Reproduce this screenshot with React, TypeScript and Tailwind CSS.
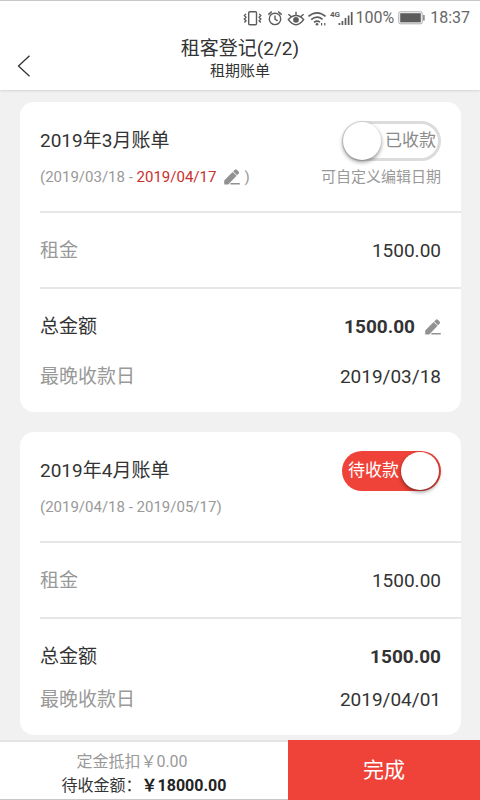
import { clsx } from 'clsx';

interface Bill {
  id: string;
  title: string;
  start: string;
  end: string;
  rent: string;
  total: string;
  dueDate: string;
  pending: boolean;
  editable: boolean;
}

const bills: Bill[] = [
  {
    id: '2019-03',
    title: '2019年3月账单',
    start: '2019/03/18',
    end: '2019/04/17',
    rent: '1500.00',
    total: '1500.00',
    dueDate: '2019/03/18',
    pending: false,
    editable: true,
  },
  {
    id: '2019-04',
    title: '2019年4月账单',
    start: '2019/04/18',
    end: '2019/05/17',
    rent: '1500.00',
    total: '1500.00',
    dueDate: '2019/04/01',
    pending: true,
    editable: false,
  },
];

function EditIcon() {
  return (
    <svg width="16" height="16" viewBox="0 0 16 16" fill="#929292" aria-hidden="true">
      <path d="M0.2 15.5 V11.6 L8.6 3 L12.6 6.8 L4.2 15.5 Z" />
      <path d="M9.2 2.4 L10.9 0.7 Q11.8 0 12.7 0.7 L14.6 2.6 Q15.4 3.5 14.7 4.4 L13.1 6.2 Z" />
      <rect x="6.4" y="14" width="9.4" height="1.5" />
    </svg>
  );
}

function StatusBar() {
  return (
    <div className="flex h-[34px] items-center justify-end border-t border-[#c8c8c8] pr-[10px] text-[16px] text-[#666]">
      <svg width="112" height="20" viewBox="0 0 112 20" fill="none" stroke="#5c5c5c" strokeWidth="1.4" aria-hidden="true">
        {/* vibrate */}
        <rect x="6.7" y="3.7" width="7.8" height="13" rx="1" />
        <path d="M4 6 L2.4 7.5 L4 9.3 L2.4 11 L4 12.7 L2.4 14.4 M17.2 6 L18.8 7.5 L17.2 9.3 L18.8 11 L17.2 12.7 L18.8 14.4" />
        {/* alarm */}
        <circle cx="33" cy="10.9" r="5.7" />
        <path d="M33 7.4 V11.2 L35.6 12.8 M26.3 6.6 L29.8 3.6 M39.7 6.6 L36.2 3.6" />
        {/* eye comfort */}
        <path d="M46.4 11.6 Q50 7.6 54 7.6 Q58 7.6 61.6 11.6 Q58 16.7 54 16.7 Q50 16.7 46.4 11.6 Z" strokeWidth="1.5" />
        <path d="M46.4 6.2 L49.6 9 M54 3.8 V7.6 M61.6 6.2 L58.4 9" />
        <circle cx="54" cy="11.8" r="2.9" fill="#5c5c5c" stroke="none" />
        {/* wifi */}
        <path d="M66.4 8.4 Q75 1.2 83.6 8.4 M69.2 11.6 Q75 6.8 80.6 11.4 M72 14.4 Q75 12 78 14.2" strokeWidth="1.6" />
        <circle cx="75" cy="16.3" r="1.3" fill="#5c5c5c" stroke="none" />
        <path d="M79.6 15 V17.4 M82.8 15 V17.4" strokeWidth="1.2" />
        {/* signal */}
        <path d="M97.4 15 V17 M100.4 13 V17 M103.5 10 V17 M106.6 7.5 V17 M109.7 4 V17" strokeWidth="1.7" />
        <text x="88" y="9" fontSize="8" fontWeight="700" fill="#5c5c5c" stroke="none">4G</text>
      </svg>
      <span className="ml-px">100%</span>
      <svg className="ml-1" width="28" height="14" viewBox="0 0 28 14" fill="none" aria-hidden="true">
        <rect x="0.8" y="0.8" width="23.4" height="12" rx="1.4" stroke="#aaa" />
        <rect x="2.2" y="2.2" width="20.6" height="9.2" fill="#5c5c5c" />
        <rect x="25.2" y="4" width="1.4" height="5.6" fill="#777" />
      </svg>
      <span className="ml-1">18:37</span>
    </div>
  );
}

function StatusSwitch({ id, pending }: { id: string; pending: boolean }) {
  return (
    <label
      htmlFor={id}
      className={clsx(
        'relative flex h-10 w-[99px] cursor-pointer items-center rounded-full text-[17px]',
        pending ? 'bg-[#ef4339] pl-[6px] text-white' : 'justify-end border-3 border-[#dcdcdc] bg-white pr-[2px] text-[#8a8a8a]',
      )}
    >
      <input id={id} type="checkbox" role="switch" defaultChecked={pending} className="sr-only" />
      {pending ? '待收款' : '已收款'}
      <span
        className={clsx(
          'absolute h-[38px] w-[38px] rounded-full bg-white shadow-[0_2px_4px_rgba(0,0,0,0.45)]',
          pending ? 'top-px right-[2px]' : '-top-[2px] -left-[2px]',
        )}
      />
    </label>
  );
}

function BillCard({ bill }: { bill: Bill }) {
  const row = clsx('flex items-center justify-between', bill.editable ? 'h-[50px]' : 'h-[43px]');

  return (
    <section className="rounded-[14px] bg-white pl-5">
      <div className="border-b-2 border-[#e6e6e6] pt-[19px] pr-5 pb-[18px]">
        <div className="flex h-10 items-center justify-between">
          <h2>{bill.title}</h2>
          <StatusSwitch id={bill.id} pending={bill.pending} />
        </div>
        <div className="flex h-8 items-center justify-between text-[15px] text-[#999]">
          <p className="flex items-center whitespace-pre">
            <span>({bill.start} - </span>
            <span className={bill.editable ? 'text-[#c9302c]' : ''}>{bill.end}</span>
            {bill.editable && (
              <button type="button" aria-label="编辑日期" className="mr-1 ml-2">
                <EditIcon />
              </button>
            )}
            <span>)</span>
          </p>
          {bill.editable && <span>可自定义编辑日期</span>}
        </div>
      </div>
      <div className="flex h-[76px] items-center justify-between border-b-2 border-[#e6e6e6] pt-[3px] pr-5">
        <span className="text-[#999]">租金</span>
        <span>{bill.rent}</span>
      </div>
      <div className={clsx('pr-5', bill.editable ? 'pt-[13px] pb-[10px]' : 'pt-[17px] pb-[13px]')}>
        <div className={row}>
          <span>总金额</span>
          <span className="flex items-center gap-[10px]">
            <b className="font-bold">{bill.total}</b>
            {bill.editable && (
              <button type="button" aria-label="编辑总金额">
                <EditIcon />
              </button>
            )}
          </span>
        </div>
        <div className={row}>
          <span className="text-[#999]">最晚收款日</span>
          <span>{bill.dueDate}</span>
        </div>
      </div>
    </section>
  );
}

export default function App() {
  return (
    <div className="flex min-h-screen flex-col bg-[#f1f1f1] font-['Roboto','Noto_Sans_CJK_SC',sans-serif] text-[19px] text-[#333]">
      <header className="z-10 bg-white shadow-[0_1px_2px_rgba(0,0,0,0.12)]">
        <StatusBar />
        <div className="grid h-14 grid-cols-[60px_1fr_60px]">
          <button type="button" aria-label="返回" className="flex items-center pt-2 pl-[17px]">
            <svg width="14" height="22" viewBox="0 0 14 22" fill="none" stroke="#333" strokeWidth="1.3">
              <path d="M12.5 0.8 L1.5 11 L12.5 21.2" />
            </svg>
          </button>
          <div className="pt-[3px] text-center">
            <h1 className="leading-6">租客登记(2/2)</h1>
            <p className="text-[15px] leading-5">租期账单</p>
          </div>
        </div>
      </header>

      <main className="flex flex-1 flex-col gap-5 pt-3 pr-[19px] pb-1 pl-5">
        {bills.map((bill) => (
          <BillCard key={bill.id} bill={bill} />
        ))}
      </main>

      <footer className="grid h-[60px] grid-cols-[3fr_2fr] bg-white text-[16px]">
        <div className="flex flex-col items-center justify-center border-t-2 border-b border-t-[#e4e4e4] border-b-[#c8c8c8] pt-[7px] leading-6">
          <p className="pr-6 text-[#999]">定金抵扣￥0.00</p>
          <p>
            待收金额：<b className="font-bold text-[#222]">￥18000.00</b>
          </p>
        </div>
        <button type="button" className="bg-[#ef4339] pt-[2px] text-[21px] text-white">
          完成
        </button>
      </footer>
    </div>
  );
}
